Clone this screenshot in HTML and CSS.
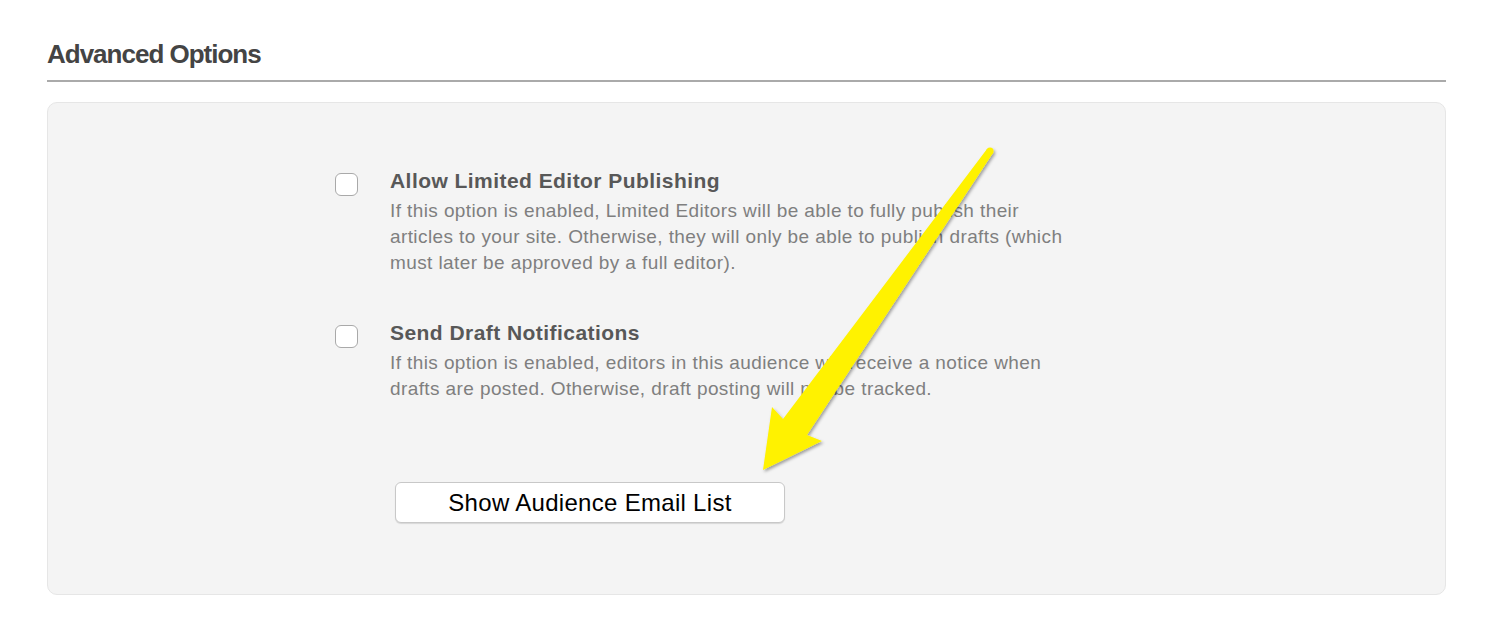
FILE: index.html
```html
<!DOCTYPE html>
<html>
<head>
<meta charset="utf-8">
<link rel="stylesheet" href="styles.css">
</head>
<body>
<div class="page">
  <h2 class="section-title">Advanced Options</h2>
  <div class="panel">
    <div class="options">
      <div class="option">
        <span class="checkbox"></span>
        <div class="option-text">
          <div class="option-title">Allow Limited Editor Publishing</div>
          <div class="option-desc">If this option is enabled, Limited Editors will be able to fully publish their articles to your site. Otherwise, they will only be able to publish drafts (which must later be approved by a full editor).</div>
        </div>
      </div>
      <div class="option">
        <span class="checkbox"></span>
        <div class="option-text">
          <div class="option-title">Send Draft Notifications</div>
          <div class="option-desc">If this option is enabled, editors in this audience will receive a notice when drafts are posted. Otherwise, draft posting will not be tracked.</div>
        </div>
      </div>
      <button class="btn">Show Audience Email List</button>
    </div>
  </div>
</div>
<svg class="annotation" width="1490" height="628" viewBox="0 0 1490 628">
  <defs>
    <filter id="sh" x="-20%" y="-20%" width="140%" height="140%">
      <feDropShadow dx="1.5" dy="2" stdDeviation="1.5" flood-color="#000" flood-opacity="0.35"/>
    </filter>
  </defs>
  <g filter="url(#sh)" fill="#fff200">
    <polygon points="987,149 783,419 772,407 763,470 822,441 807,435 993,153"/>
    <circle cx="990" cy="151" r="3.6"/>
  </g>
</svg>
</body>
</html>
```
FILE: styles.css
```css
html, body {
  margin: 0;
  padding: 0;
  background: #ffffff;
}
body {
  position: relative;
  width: 1490px;
  height: 628px;
  overflow: hidden;
  font-family: "Liberation Sans", Arial, sans-serif;
}
.page {
  padding: 39px 0 0 47px;
  width: 1399px;
}
.section-title {
  margin: 0;
  font-size: 26px;
  line-height: 30px;
  font-weight: bold;
  letter-spacing: -1px;
  color: #444444;
  padding-bottom: 11px;
  border-bottom: 2px solid #aaaaaa;
}
.panel {
  margin-top: 20px;
  height: 493px;
  box-sizing: border-box;
  background: #f4f4f4;
  border: 1px solid #e6e6e6;
  border-radius: 10px;
  padding: 64px 0 0 287px;
}
.options {
  display: flex;
  flex-direction: column;
  align-items: flex-start;
}
.option {
  display: flex;
  gap: 32px;
  margin-bottom: 43px;
}
.checkbox {
  flex: none;
  width: 23px;
  height: 23px;
  margin-top: 6px;
  box-sizing: border-box;
  background: #ffffff;
  border: 1px solid #a9a9a9;
  border-radius: 6px;
}
.option-text {
  width: 690px;
}
.option-title {
  font-size: 21px;
  line-height: 28px;
  font-weight: bold;
  letter-spacing: 0.45px;
  color: #585858;
}
.option-desc {
  margin-top: 3px;
  font-size: 19px;
  line-height: 26px;
  letter-spacing: 0.4px;
  color: #7f7f7f;
}
.btn {
  margin: 37px 0 0 60px;
  width: 390px;
  height: 41px;
  background: #ffffff;
  border: 1px solid #c8c8c8;
  border-radius: 6px;
  box-shadow: 0 1px 1px rgba(0,0,0,0.12);
  font-family: "Liberation Sans", Arial, sans-serif;
  font-size: 24px;
  letter-spacing: 0.3px;
  color: #000000;
  padding: 0;
}
.annotation {
  position: absolute;
  left: 0;
  top: 0;
  pointer-events: none;
}
```
